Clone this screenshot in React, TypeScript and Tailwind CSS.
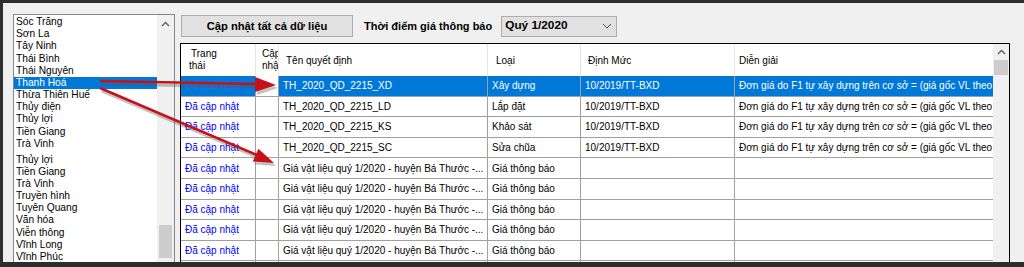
import React from "react";

const font = { fontFamily: '"Liberation Sans", Arial, sans-serif' };

const listTop = [
  "Sóc Trăng",
  "Sơn La",
  "Tây Ninh",
  "Thái Bình",
  "Thái Nguyên",
  "Thanh Hoá",
  "Thừa Thiên Huế",
  "Thủy điện",
  "Thủy lợi",
  "Tiền Giang",
  "Trà Vinh",
];
const listBottom = [
  "Thủy lợi",
  "Tiền Giang",
  "Trà Vinh",
  "Truyền hình",
  "Tuyên Quang",
  "Văn hóa",
  "Viễn thông",
  "Vĩnh Long",
  "Vĩnh Phúc",
  "Yên Bái",
];

const dien = "Đơn giá do F1 tự xây dựng trên cơ sở = (giá gốc VL theo 2020)";
type Row = { ten: string; loai: string; dm: string; dg: string; sel?: boolean; status?: string };
const gia = "Giá vật liệu quý 1/2020 - huyện Bá Thước -...";
const rows: Row[] = [
  { ten: "TH_2020_QD_2215_XD", loai: "Xây dựng", dm: "10/2019/TT-BXD", dg: dien, sel: true, status: "Đã cập nhật" },
  { ten: "TH_2020_QD_2215_LD", loai: "Lắp đặt", dm: "10/2019/TT-BXD", dg: dien, status: "Đã cập nhật" },
  { ten: "TH_2020_QD_2215_KS", loai: "Khảo sát", dm: "10/2019/TT-BXD", dg: dien, status: "Đã cập nhật" },
  { ten: "TH_2020_QD_2215_SC", loai: "Sửa chũa", dm: "10/2019/TT-BXD", dg: dien, status: "Đã cập nhật" },
  { ten: gia, loai: "Giá thông báo", dm: "", dg: "", status: "Đã cập nhật" },
  { ten: gia, loai: "Giá thông báo", dm: "", dg: "", status: "Đã cập nhật" },
  { ten: gia, loai: "Giá thông báo", dm: "", dg: "", status: "Đã cập nhật" },
  { ten: gia, loai: "Giá thông báo", dm: "", dg: "", status: "Đã cập nhật" },
  { ten: gia, loai: "Giá thông báo", dm: "", dg: "", status: "Đã cập nhật" },
  { ten: "", loai: "", dm: "", dg: "", status: "" },
];

function UpChevron() {
  return (
    <svg width="9" height="6" viewBox="0 0 9 6">
      <path d="M1 5 L4.5 1.5 L8 5" fill="none" stroke="#606060" strokeWidth="1.4" />
    </svg>
  );
}

function ListBox() {
  return (
    <div className="flex h-[260px] w-[162px] shrink-0 border border-[#828790] bg-white">
      <div className="flex-1 overflow-hidden pt-[1px] text-[10.2px] text-black">
        {listTop.map((t) => (
          <div
            key={"a" + t}
            className={
              "flex h-[12.2px] items-center whitespace-nowrap pl-[2px] leading-none " +
              (t === "Thanh Hoá" ? "bg-[#0078d7] text-white" : "")
            }
          >
            {t}
          </div>
        ))}
        <div className="h-[4px]" />
        {listBottom.map((t) => (
          <div key={"b" + t} className="flex h-[12.1px] items-center whitespace-nowrap pl-[2px] leading-none">
            {t}
          </div>
        ))}
      </div>
      <div className="flex w-[17px] flex-col bg-[#f0f0f0]">
        <div className="flex h-[17px] items-center justify-center">
          <UpChevron />
        </div>
        <div className="mx-[2px] mt-[193px] h-[33px] bg-[#cdcdcd]" />
      </div>
    </div>
  );
}

function Cell({
  w,
  children,
  cls = "",
}: {
  w: string;
  children?: React.ReactNode;
  cls?: string;
}) {
  return (
    <div className={`${w} flex shrink-0 items-center overflow-hidden whitespace-nowrap border-r border-[#a0a0a0] pl-[4px] ${cls}`}>
      {children}
    </div>
  );
}

function Grid() {
  return (
    <div className="flex h-[230px] w-[830px] border border-black bg-white text-[10px] text-black">
      <div className="flex w-[812px] flex-col">
        <div className="flex h-[32px] shrink-0 text-black">
          <div className="flex w-[75px] shrink-0 flex-col justify-center border-r border-[#e5e5e5] pl-[8px] leading-[12.5px]">
            <span className="pl-[2px]">Trang</span>
            <span>thái</span>
          </div>
          <div className="flex w-[23px] shrink-0 flex-col justify-center overflow-hidden border-r border-[#e5e5e5] pl-[6px] leading-[12.5px]">
            <span>Cập</span>
            <span>nhật</span>
          </div>
          <div className="flex w-[209px] shrink-0 items-center border-r border-[#e5e5e5] pl-[7px]">Tên quyết định</div>
          <div className="flex w-[93px] shrink-0 items-center border-r border-[#e5e5e5] pl-[8px]">Loại</div>
          <div className="flex w-[154px] shrink-0 items-center border-r border-[#e5e5e5] pl-[7px]">Định Mức</div>
          <div className="flex w-[258px] shrink-0 items-center pl-[4px]">Diễn giải</div>
        </div>
        {rows.map((r, i) => (
          <div key={i} className={"flex h-[20.6px] shrink-0 border-b border-[#a0a0a0] " + (r.sel ? "bg-[#0078d7] text-white" : "")}>
            <Cell w="w-[75px]" cls={r.sel ? "text-[#2f6fe0]" : "text-[#0000ff]"}>
              {r.status}
            </Cell>
            <Cell w="w-[23px]" cls="bg-white" />
            <Cell w="w-[209px]">{r.ten}</Cell>
            <Cell w="w-[93px]">{r.loai}</Cell>
            <Cell w="w-[154px]">{r.dm}</Cell>
            <div className="flex w-[258px] shrink-0 items-center overflow-hidden whitespace-nowrap pl-[4px]">{r.dg}</div>
          </div>
        ))}
      </div>
      <div className="flex w-[16px] flex-col bg-[#f0f0f0]">
        <div className="flex h-[16px] items-center justify-center">
          <UpChevron />
        </div>
        <div className="ml-[1px] mr-[1px] h-[15px] bg-[#cdcdcd]" />
      </div>
    </div>
  );
}

function Arrows() {
  return (
    <svg className="pointer-events-none absolute left-0 top-0" width="1024" height="267" viewBox="0 0 1024 267">
      <g opacity="0.35" transform="translate(2,3)">
        <line x1="100" y1="81" x2="258" y2="84" stroke="#555" strokeWidth="3" />
        <polygon points="276,85 255,77 255,92" fill="#555" />
        <line x1="100" y1="88" x2="257" y2="155" stroke="#555" strokeWidth="3" />
        <polygon points="274,163 252.8,161.5 258.4,148.7" fill="#555" />
      </g>
      <line x1="100" y1="81" x2="258" y2="84" stroke="#c8101a" strokeWidth="2.6" />
      <polygon points="276,85 255,77 255,92" fill="#c8101a" />
      <line x1="100" y1="88" x2="257" y2="155" stroke="#c8101a" strokeWidth="2.6" />
      <polygon points="274,163 252.8,161.5 258.4,148.7" fill="#c8101a" />
    </svg>
  );
}

export default function App() {
  return (
    <div className="relative h-[267px] w-[1024px] overflow-hidden bg-[#2e2e2e]" style={font}>
      <div className="ml-[3px] mt-[3px] h-[259px] w-[1021px] overflow-hidden bg-[#f0f0f0]">
        <div className="flex pl-[10px] pt-[11px]">
          <ListBox />
          <div className="ml-[5px] flex flex-col">
            <div className="ml-[1px] mt-[1px] flex items-center">
              <div className="flex h-[22px] w-[172px] items-center justify-center border border-[#adadad] bg-[#e1e1e1] text-[11.2px] font-bold text-black">
                Cập nhật tất cả dữ liệu
              </div>
              <div className="ml-[11px] text-[11px] font-bold text-black">Thời điểm giá thông báo</div>
              <div className="ml-[9px] flex h-[21px] w-[116px] items-center justify-between border border-[#adadad] bg-[#e1e1e1] pl-[3px] pr-[4px]">
                <span className="text-[11.8px] font-bold text-black">Quý 1/2020</span>
                <svg width="10" height="6" viewBox="0 0 10 6">
                  <path d="M1 1 L5 5 L9 1" fill="none" stroke="#505050" strokeWidth="1" />
                </svg>
              </div>
            </div>
            <div className="mt-[6px]">
              <Grid />
            </div>
          </div>
        </div>
      </div>
      <Arrows />
    </div>
  );
}
